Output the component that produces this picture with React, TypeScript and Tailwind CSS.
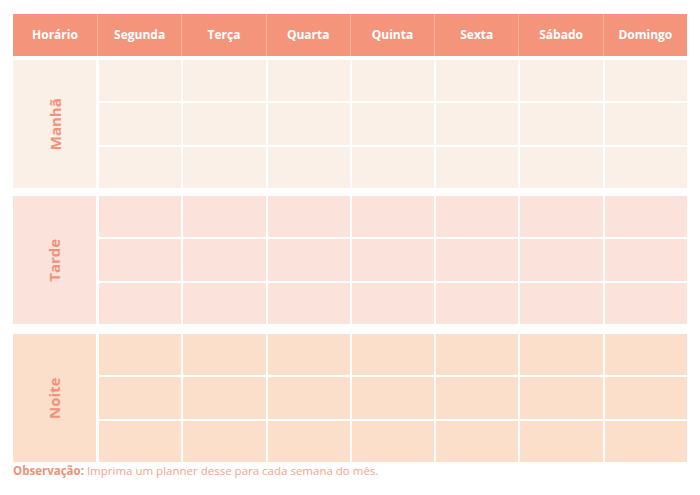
const days = ['Segunda', 'Terça', 'Quarta', 'Quinta', 'Sexta', 'Sábado', 'Domingo'];

const sections = [
  { label: 'Manhã', bg: 'bg-[#faf0e8]', mt: 'mt-[4px]' },
  { label: 'Tarde', bg: 'bg-[#fbe3dc]', mt: 'mt-[8px]' },
  { label: 'Noite', bg: 'bg-[#fbdfcb]', mt: 'mt-[10px]' },
];

export default function App() {
  return (
    <div className="w-[700px] h-[495px] bg-white px-[13px] pt-[14px] font-['Open_Sans',sans-serif] overflow-hidden">
      {/* header */}
      <div className="grid grid-cols-[84px_repeat(7,1fr)] gap-px bg-[#f7b09c] h-[42px] w-[674px]">
        <div className="bg-[#f4957b] flex items-center justify-center text-white text-[12px] font-bold">Horário</div>
        {days.map((d) => (
          <div key={d} className="bg-[#f4957b] flex items-center justify-center text-white text-[12px] font-bold">
            {d}
          </div>
        ))}
      </div>

      {sections.map((s) => (
        <div key={s.label} className={`flex gap-[3px] h-[128px] w-[674px] ${s.mt}`}>
          <div className={`w-[83px] shrink-0 ${s.bg} flex items-center justify-center`}>
            <span className="-rotate-90 text-[#f0937a] text-[15px] font-bold whitespace-nowrap">{s.label}</span>
          </div>
          <div className="flex-1 grid grid-cols-7 grid-rows-3 gap-[2px]">
            {Array.from({ length: 21 }).map((_, i) => (
              <div key={i} className={s.bg} />
            ))}
          </div>
        </div>
      ))}

      <p className="mt-[1px] text-[11.5px] text-[#f2a48f] leading-[15px]">
        <span className="font-bold text-[#ef8f75]">Observação:</span> Imprima um planner desse para cada semana do mês.
      </p>
    </div>
  );
}
